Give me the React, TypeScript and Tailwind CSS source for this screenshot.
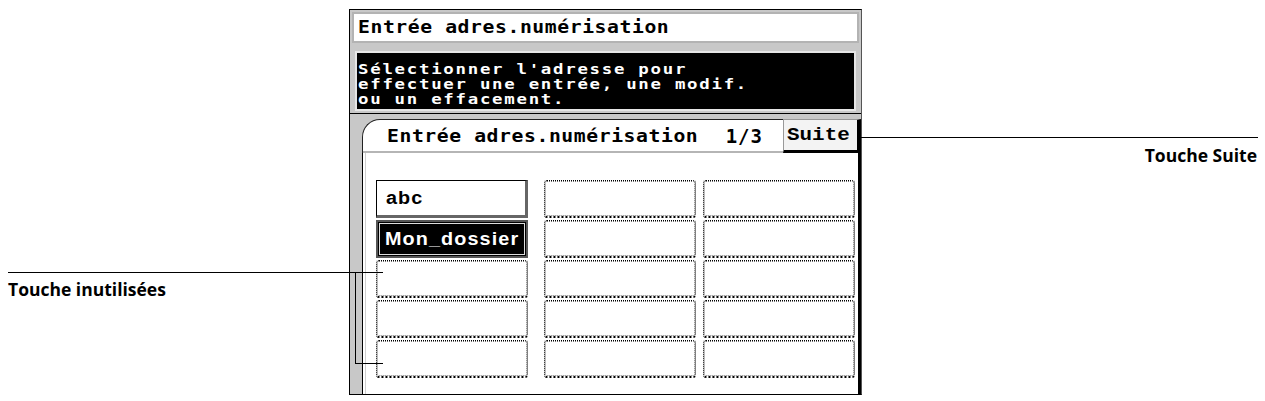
const mono = "font-['DejaVu_Sans_Mono','Liberation_Mono',monospace]";
const callout = "font-['Open_Sans','Noto_Sans',sans-serif] font-bold text-[17.5px] leading-none text-black";

function ScreenText({ children, className = '' }: { children: React.ReactNode; className?: string }) {
  return (
    <span className={`inline-block origin-left whitespace-pre ${mono} ${className}`}>{children}</span>
  );
}

function EmptyKey() {
  return (
    <div className="h-[38px] rounded-[3px] border border-dotted border-black border-b-2 bg-white">
      <div className="h-full rounded-[2px] border border-dotted border-[#777]" />
    </div>
  );
}

function AddressKey({ label, selected }: { label: string; selected?: boolean }) {
  if (selected) {
    return (
      <div className="h-[38px] border-2 border-[#555] bg-black p-px">
        <div className="flex h-full items-center border border-[#ddd] pl-[5px]">
          <span className="inline-block origin-left scale-x-[1.1] font-['Liberation_Sans',Arial,sans-serif] text-[18px] font-bold leading-none tracking-[1px] text-white">
            {label}
          </span>
        </div>
      </div>
    );
  }
  return (
    <div className="flex h-[38px] items-center border border-black border-r-[3px] border-b-[3px] border-r-[#666] border-b-[#666] bg-white pl-[9px]">
      <span className="inline-block origin-left scale-x-[1.1] font-['Liberation_Sans',Arial,sans-serif] text-[18px] font-bold leading-none tracking-[1px] text-black">
        {label}
      </span>
    </div>
  );
}

function KeyColumn({ keys, className = '' }: { keys: { label?: string; selected?: boolean }[]; className?: string }) {
  return (
    <div className={`flex w-[152px] flex-col gap-[2px] ${className}`}>
      {keys.map((k, i) =>
        k.label ? <AddressKey key={i} label={k.label} selected={k.selected} /> : <EmptyKey key={i} />
      )}
    </div>
  );
}

export default function App() {
  const blank = [{}, {}, {}, {}, {}];

  return (
    <div className="relative h-[401px] w-[1265px] overflow-hidden bg-white pt-[9px]">
      {/* panel */}
      <div className="ml-[349px] flex h-[386px] w-[513px] flex-col border border-black border-r-[#555] bg-[#c8c8c8]">
        <div className="mx-[2px] mt-[2px] flex h-[31px] items-center border-2 border-[#b3b3b3] bg-white pl-[4px]">
          <ScreenText className="scale-x-[1.16] text-[17px] font-bold leading-none tracking-[0.5px] text-black">
            Entrée adres.numérisation
          </ScreenText>
        </div>

        <div className="ml-[5px] mr-[5px] mt-[8px] h-[60px] border-2 border-[#e6e6e6] bg-black pl-px pt-[3px]">
          {['Sélectionner l\'adresse pour', 'effectuer une entrée, une modif.', 'ou un effacement.'].map((line) => (
            <div key={line} className="h-[15px]">
              <ScreenText className="scale-x-[1.24] text-[14px] font-bold leading-[15px] tracking-[1.4px] text-white">
                {line}
              </ScreenText>
            </div>
          ))}
        </div>

        <div className="mt-[2px] flex flex-1 border-t border-black">
          <div className="w-[12px]" />
          <div className="flex flex-1 flex-col pt-[5px]">
            <div className="flex h-[34px]">
              <div className="flex flex-1 items-center rounded-tl-[18px] border-l border-t border-[#222] bg-white pl-[24px] pr-[20px] shadow-[inset_0_-2px_0_#b5b5b5]">
                <ScreenText className="scale-x-[1.16] text-[17px] font-bold leading-none tracking-[0.5px] text-black">
                  Entrée adres.numérisation
                </ScreenText>
                <span className={`ml-auto ${mono} text-[19px] font-bold leading-none tracking-[1px] text-black`}>1/3</span>
              </div>
              <div className="flex w-[78px] items-center border border-[#999] border-b-[3px] border-r-[4px] border-b-black border-r-black bg-[#f3f3f3] pl-[3px]">
                <ScreenText className="scale-x-[1.1] font-['Liberation_Mono','DejaVu_Sans_Mono',monospace] text-[19px] font-bold leading-none text-black">
                  Suite
                </ScreenText>
              </div>
            </div>

            <div className="flex flex-1 border-l border-r-[3px] border-black bg-white">
              <div className="ml-[2px] flex flex-1 border-l border-[#cfcfcf] pl-[10px] pt-[27px]">
                <KeyColumn keys={[{ label: 'abc' }, { label: 'Mon_dossier', selected: true }, {}, {}, {}]} />
                <KeyColumn keys={blank} className="ml-[16px]" />
                <KeyColumn keys={blank} className="ml-[7px]" />
              </div>
            </div>
          </div>
        </div>
      </div>

      {/* callouts */}
      <div className="absolute left-[858px] top-[137px] h-px w-[400px] bg-black" />
      <div className={`absolute right-[8px] top-[147px] ${callout}`}>Touche Suite</div>

      <div className="absolute left-[8px] top-[272px] h-px w-[375px] bg-black" />
      <div className="absolute left-[355px] top-[272px] h-[92px] w-px bg-black" />
      <div className="absolute left-[355px] top-[363px] h-px w-[28px] bg-black" />
      <div className={`absolute left-[8px] top-[281px] ${callout}`}>Touche inutilisées</div>
    </div>
  );
}
